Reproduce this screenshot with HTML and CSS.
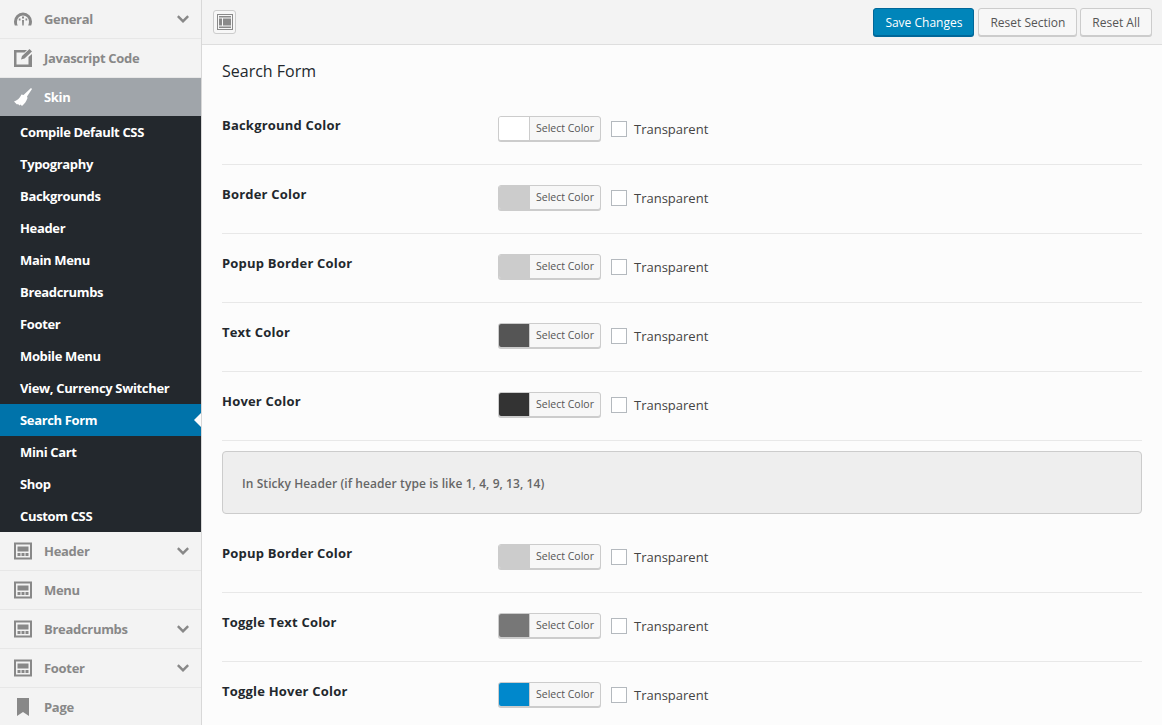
FILE: index.html

```html
<!DOCTYPE html>
<html>
<head>
  <title>Theme Options - Skin - Search Form</title>
  <link rel="stylesheet" href="styles.css">
</head>
<body>
  <svg class="icon-defs" width="0" height="0">
    <symbol id="icon-layout" viewBox="0 0 18 17">
      <path fill-rule="evenodd" d="M0 0h18v17H0zM2 2v13h14V2zM3.500 4h11v5h-11zM3.500 10.500h3v3h-3zM7.500 10.500h3v3h-3zM11.500 10.500h3v3h-3z"/>
    </symbol>
    <symbol id="icon-chevron" viewBox="0 0 12 8">
      <path d="M1.700 0.300 6 4.500 10.300 0.300 12 2 6 8 0 2z"/>
    </symbol>
  </svg>

  <div class="layout">
    <nav class="sidebar">
      <a class="menu-item">
        <svg class="menu-icon" viewBox="0 0 18 18"><path d="M9 2.500A9 9 0 0 0 0 11.500c0 1.500.3 2.800.8 4h3A6.500 6.500 0 0 1 3 11.500a6 6 0 0 1 12 0c0 1.500-.3 2.800-.8 4h3c.5-1.200.8-2.500.8-4a9 9 0 0 0-9-9zM8 6.500h2v2H8zM4.800 8.500h1.700v2H4.800zM11.500 8.500h1.700v2h-1.700zM8 10h2l-.3 5.500H8.300z"/></svg>
        <span class="menu-label">General</span>
        <svg class="chevron"><use href="#icon-chevron"/></svg>
      </a>
      <a class="menu-item">
        <svg class="menu-icon" viewBox="0 0 18 18"><path d="M0 1h13l-2.500 2.500H2.500v12h12V8L18 5v13H0zM15.500 0 18 2.500l-7.500 7-3.500 1 1-3.500z"/></svg>
        <span class="menu-label">Javascript Code</span>
      </a>
      <a class="menu-item menu-item-open">
        <svg class="menu-icon" viewBox="0 0 18 18"><path d="M17 0l1 1-5 7.500.5 1.500c-1 3-3 6-5.500 8l-1.500-1.500-1 1-1.500-1.500-1 .5-1.500-1.500L0 13.500c3-1 5.500-3 7.500-7l2 .5z"/></svg>
        <span class="menu-label">Skin</span>
      </a>
      <ul class="submenu">
        <li>Compile Default CSS</li>
        <li>Typography</li>
        <li>Backgrounds</li>
        <li>Header</li>
        <li>Main Menu</li>
        <li>Breadcrumbs</li>
        <li>Footer</li>
        <li>Mobile Menu</li>
        <li>View, Currency Switcher</li>
        <li class="active">Search Form</li>
        <li>Mini Cart</li>
        <li>Shop</li>
        <li>Custom CSS</li>
      </ul>
      <a class="menu-item">
        <svg class="menu-icon"><use href="#icon-layout"/></svg>
        <span class="menu-label">Header</span>
        <svg class="chevron"><use href="#icon-chevron"/></svg>
      </a>
      <a class="menu-item">
        <svg class="menu-icon"><use href="#icon-layout"/></svg>
        <span class="menu-label">Menu</span>
      </a>
      <a class="menu-item">
        <svg class="menu-icon"><use href="#icon-layout"/></svg>
        <span class="menu-label">Breadcrumbs</span>
        <svg class="chevron"><use href="#icon-chevron"/></svg>
      </a>
      <a class="menu-item">
        <svg class="menu-icon"><use href="#icon-layout"/></svg>
        <span class="menu-label">Footer</span>
        <svg class="chevron"><use href="#icon-chevron"/></svg>
      </a>
      <a class="menu-item">
        <svg class="menu-icon" viewBox="0 0 18 18"><path d="M3 0h12v18l-6-4-6 4z"/></svg>
        <span class="menu-label">Page</span>
      </a>
    </nav>

    <div class="main">
      <header class="topbar">
        <button class="btn btn-icon" type="button">
          <svg viewBox="0 0 16 16" width="16" height="16"><path fill-rule="evenodd" d="M0 0h16v16H0zM1 1v14h14V1zM2 2h12v1.500H2zM2 12.500h12V14H2zM2 4.500h3v7H2zM6 4.500h8v7H6z"/></svg>
        </button>
        <div class="topbar-actions">
          <button class="btn btn-primary" type="button">Save Changes</button>
          <button class="btn" type="button">Reset Section</button>
          <button class="btn" type="button">Reset All</button>
        </div>
      </header>

      <section class="content">
        <h2>Search Form</h2>

        <div class="field">
          <label>Background Color</label>
          <div class="control">
            <span class="picker"><i class="swatch swatch-white"></i><b>Select Color</b></span>
            <span class="checkbox"></span><span class="check-label">Transparent</span>
          </div>
        </div>
        <div class="field">
          <label>Border Color</label>
          <div class="control">
            <span class="picker"><i class="swatch swatch-light"></i><b>Select Color</b></span>
            <span class="checkbox"></span><span class="check-label">Transparent</span>
          </div>
        </div>
        <div class="field">
          <label>Popup Border Color</label>
          <div class="control">
            <span class="picker"><i class="swatch swatch-light"></i><b>Select Color</b></span>
            <span class="checkbox"></span><span class="check-label">Transparent</span>
          </div>
        </div>
        <div class="field">
          <label>Text Color</label>
          <div class="control">
            <span class="picker"><i class="swatch swatch-text"></i><b>Select Color</b></span>
            <span class="checkbox"></span><span class="check-label">Transparent</span>
          </div>
        </div>
        <div class="field">
          <label>Hover Color</label>
          <div class="control">
            <span class="picker"><i class="swatch swatch-dark"></i><b>Select Color</b></span>
            <span class="checkbox"></span><span class="check-label">Transparent</span>
          </div>
        </div>

        <div class="notice">In Sticky Header (if header type is like 1, 4, 9, 13, 14)</div>

        <div class="field">
          <label>Popup Border Color</label>
          <div class="control">
            <span class="picker"><i class="swatch swatch-light"></i><b>Select Color</b></span>
            <span class="checkbox"></span><span class="check-label">Transparent</span>
          </div>
        </div>
        <div class="field">
          <label>Toggle Text Color</label>
          <div class="control">
            <span class="picker"><i class="swatch swatch-toggle"></i><b>Select Color</b></span>
            <span class="checkbox"></span><span class="check-label">Transparent</span>
          </div>
        </div>
        <div class="field">
          <label>Toggle Hover Color</label>
          <div class="control">
            <span class="picker"><i class="swatch swatch-blue"></i><b>Select Color</b></span>
            <span class="checkbox"></span><span class="check-label">Transparent</span>
          </div>
        </div>
      </section>
    </div>
  </div>
</body>
</html>
```

FILE: styles.css

```css
* {
  box-sizing: border-box;
}
html, body {
  height: 100%;
}
body {
  margin: 0;
  overflow: hidden;
  font-family: "Open Sans", sans-serif;
  background: #fcfcfc;
  color: #23282d;
}
.icon-defs {
  display: block;
  height: 0;
}
.layout {
  display: flex;
  height: 725px;
}

/* sidebar */
.sidebar {
  width: 202px;
  flex-shrink: 0;
  background: #f3f3f3;
  border-right: 1px solid #d8d8d8;
}
.menu-item {
  display: flex;
  align-items: center;
  height: 39px;
  padding: 0 12px 1px 14px;
  border-bottom: 1px solid #e7e7e7;
  color: #888;
  font-size: 13px;
  font-weight: 700;
  letter-spacing: -0.3px;
}
.menu-icon {
  width: 18px;
  height: 18px;
  fill: #888;
  flex-shrink: 0;
}
.menu-label {
  margin-left: 12px;
  flex: 1;
}
.chevron {
  width: 12px;
  height: 8px;
  fill: #888;
  flex-shrink: 0;
}
.menu-item-open {
  height: 38px;
  background: #a0a5aa;
  border-bottom: 0;
  color: #fff;
}
.menu-item-open .menu-icon {
  fill: #fff;
}
.submenu {
  list-style: none;
  margin: 0;
  padding: 0;
  background: #23282d;
  color: #fff;
  font-size: 13px;
  font-weight: 700;
  letter-spacing: -0.35px;
}
.submenu li {
  position: relative;
  height: 32px;
  line-height: 32px;
  padding-left: 20px;
}
.submenu .active {
  background: #0073aa;
}
.submenu .active::after {
  content: "";
  position: absolute;
  right: 0;
  top: 9px;
  border: 7px solid transparent;
  border-left: 0;
  border-right-color: #fcfcfc;
}

/* top bar */
.main {
  flex: 1;
  min-width: 0;
}
.topbar {
  display: flex;
  justify-content: space-between;
  align-items: center;
  height: 45px;
  padding: 0 10px 0 11px;
  background: #f3f3f3;
  border-bottom: 1px solid #dedede;
}
.topbar-actions {
  display: flex;
  gap: 3px;
}
.btn {
  height: 28px;
  padding: 0 11px;
  background: #f7f7f7;
  border: 1px solid #ccc;
  border-radius: 3px;
  box-shadow: 0 1px 0 #ccc;
  color: #555;
  font-family: inherit;
  font-size: 12px;
}
.btn-icon {
  display: flex;
  align-items: center;
  justify-content: center;
  width: 23px;
  height: 24px;
  padding: 0;
  box-shadow: none;
}
.btn-icon svg {
  fill: #8a8a8a;
}
.btn-primary {
  margin-right: 1px;
  background: #0085ba;
  border-color: #006799;
  box-shadow: 0 1px 0 #006799;
  color: #fff;
}

/* form */
.content {
  padding: 0 20px;
}
h2 {
  margin: 0;
  height: 51px;
  padding-top: 14px;
  font-size: 16px;
  font-weight: 400;
  line-height: 24px;
  color: #23282d;
}
.field {
  display: flex;
  height: 69px;
  padding-top: 20px;
  border-bottom: 1px solid #e8e8e8;
}
.field:last-child {
  border-bottom: 0;
}
.field label {
  width: 276px;
  flex-shrink: 0;
  margin-top: -1px;
  font-size: 13px;
  font-weight: 700;
  letter-spacing: 0.2px;
  line-height: 20px;
  color: #23282d;
}
.control {
  display: flex;
  align-items: flex-start;
}
.picker {
  display: flex;
  width: 103px;
  height: 25px;
  background: #f7f7f7;
  border: 1px solid #ccc;
  border-radius: 3px;
  box-shadow: 0 1px 0 #ccc;
  overflow: hidden;
}
.swatch {
  width: 31px;
  border-right: 1px solid #ccc;
}
.picker b {
  flex: 1;
  font-size: 10.500px;
  font-weight: 400;
  line-height: 23px;
  text-align: center;
  color: #555;
}
.swatch-white { background: #fff; }
.swatch-light { background: #ccc; }
.swatch-text { background: #555; }
.swatch-dark { background: #333; }
.swatch-toggle { background: #777; }
.swatch-blue { background: #0088cc; }
.checkbox {
  width: 16px;
  height: 16px;
  margin: 5px 0 0 10px;
  background: #fff;
  border: 1px solid #b4b9be;
}
.check-label {
  margin: 3px 0 0 7px;
  font-size: 13px;
  line-height: 20px;
  color: #444;
}
.notice {
  height: 63px;
  margin: 10px 0;
  padding: 1px 0 0 19px;
  background: #eee;
  border: 1px solid #ccc;
  border-radius: 4px;
  color: #666;
  font-size: 12px;
  font-weight: 600;
  letter-spacing: 0.08px;
  line-height: 61px;
}
```
